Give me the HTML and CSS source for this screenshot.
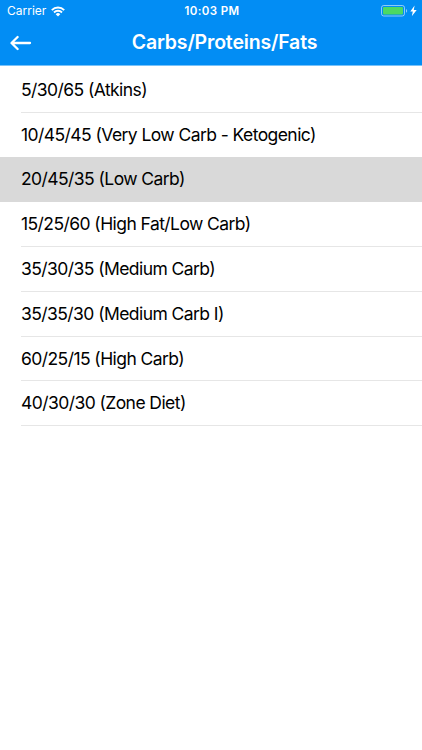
FILE: index.html
```html
<!DOCTYPE html>
<html lang="en">
<head>
    <meta charset="UTF-8">
    <meta name="viewport" content="width=device-width, initial-scale=1.0">
    <title>Carbs/Proteins/Fats</title>
    <link rel="stylesheet" href="styles.css">
</head>
<body>

    <header>
        <!-- Status bar -->
        <div class="status-bar">
            <div class="status-left">
                <span class="carrier">Carrier</span>
                <svg class="wifi" width="14" height="11" viewBox="0 0 14 11">
                    <path d="M0.8 4.1a8.8 8.8 0 0 1 12.4 0M3 6.5a5.6 5.6 0 0 1 8 0" fill="none" stroke="#fff" stroke-width="1.9"/>
                    <path d="M7 10.6L4.7 8.3a3.2 3.2 0 0 1 4.6 0z" fill="#fff"/>
                </svg>
            </div>
            <span class="time">10:03 PM</span>
            <div class="status-right">
                <svg width="36" height="12" viewBox="0 0 36 12">
                    <rect x="0.5" y="0.5" width="23" height="10.5" rx="2.2" fill="none" stroke="#fff" stroke-opacity="0.55"/>
                    <rect x="2" y="2" width="20" height="7.5" rx="1" fill="#4cd964"/>
                    <path d="M25 4v3.8c1.6-.6 1.6-3.2 0-3.8z" fill="#fff" fill-opacity="0.55"/>
                    <path d="M33.6 0.6L29.3 6.5h2.5l-1 4.7 4.9-6.2h-2.9z" fill="#fff"/>
                </svg>
            </div>
        </div>

        <!-- Navigation bar -->
        <div class="nav-bar">
            <button class="back-btn" aria-label="Back">
                <svg width="22" height="16" viewBox="0 0 22 16">
                    <path d="M20 8H1.8M7.6 2L1.5 8L7.6 14" fill="none" stroke="#fff" stroke-width="2.3" stroke-linecap="round" stroke-linejoin="round"/>
                </svg>
            </button>
            <h1>Carbs/Proteins/Fats</h1>
        </div>
    </header>

    <ul class="diet-list">
        <li>5/30/65 (Atkins)</li>
        <li>10/45/45 (Very Low Carb - Ketogenic)</li>
        <li class="selected">20/45/35 (Low Carb)</li>
        <li>15/25/60 (High Fat/Low Carb)</li>
        <li>35/30/35 (Medium Carb)</li>
        <li>35/35/30 (Medium Carb I)</li>
        <li>60/25/15 (High Carb)</li>
        <li>40/30/30 (Zone Diet)</li>
    </ul>

</body>
</html>
```
FILE: styles.css
```css
* {
    box-sizing: border-box;
    margin: 0;
    padding: 0;
}

body {
    font-family: Inter, Roboto, sans-serif;
    background: #fff;
    color: #000;
}

header {
    height: 66px;
    background: #028df4;
    border-bottom: 1px solid #78c2f9;
    color: #fff;
}

/* Status bar */
.status-bar {
    display: grid;
    grid-template-columns: 1fr auto 1fr;
    align-items: center;
    height: 22px;
    padding: 0 5px 0 7px;
    font-size: 12px;
}

.status-left {
    display: flex;
    align-items: center;
    gap: 5px;
}

.carrier {
    padding-bottom: 1px;
    line-height: 21px;
}

.time {
    font-size: 11.5px;
    font-weight: 600;
    letter-spacing: 0.4px;
}

.status-right {
    display: flex;
    justify-content: flex-end;
}

/* Navigation bar */
.nav-bar {
    display: grid;
    grid-template-columns: 60px 1fr 33px;
    align-items: center;
    height: 42px;
}

.back-btn {
    display: flex;
    padding-left: 10px;
    background: none;
    border: none;
}

h1 {
    padding-bottom: 2px;
    text-align: center;
    font-size: 19.5px;
    font-weight: 600;
    letter-spacing: -0.17px;
}

/* Diet list */
.diet-list {
    padding-top: 1.8px;
    list-style: none;
}

.diet-list li {
    height: 44.8px;
    margin-left: 21px;
    border-bottom: 1px solid #e6e6e6;
    font-size: 17.5px;
    letter-spacing: -0.57px;
    line-height: 44.6px;
}

.diet-list li:nth-child(2) {
    border-bottom-color: #fff;
}

.diet-list .selected {
    margin-left: 0;
    padding-left: 21px;
    background: #d9d9d9;
    border-bottom-color: #d9d9d9;
}
```
